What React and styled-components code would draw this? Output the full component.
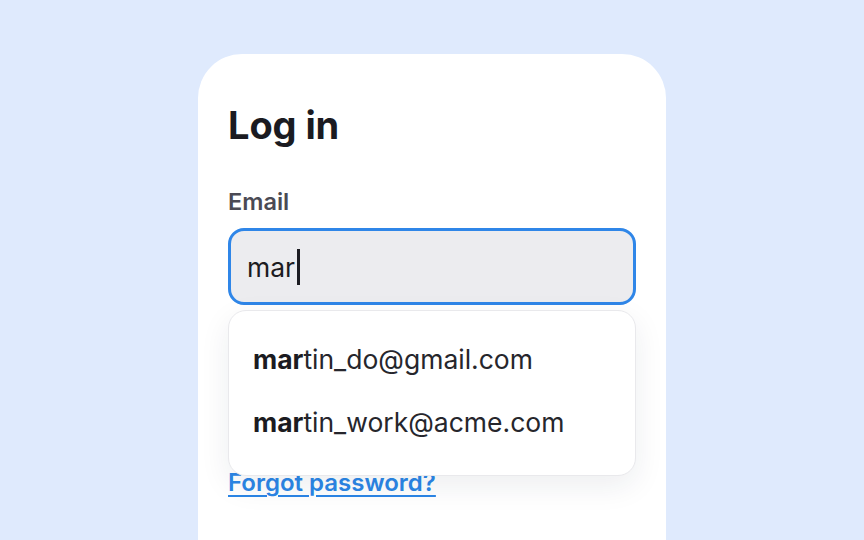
import React from "react";
import styled, { createGlobalStyle } from "styled-components";

const Global = createGlobalStyle`
  html, body { margin: 0; padding: 0; }
  body {
    width: 864px; height: 540px; overflow: hidden;
    background: #dfeafd;
    font-family: Inter, "Noto Sans", sans-serif;
  }
`;

const Page = styled.div`
  width: 864px;
  height: 540px;
  display: flex;
  justify-content: center;
  padding-top: 54px;
  box-sizing: border-box;
  overflow: hidden;
`;

const Card = styled.div`
  width: 468px;
  height: 560px;
  background: #ffffff;
  border-radius: 44px;
  padding: 49px 30px 0 30px;
  box-sizing: border-box;
  display: flex;
  flex-direction: column;
`;

const Title = styled.h1`
  margin: 0;
  font-size: 38px;
  line-height: 45px;
  font-weight: 700;
  color: #1b1b21;
  letter-spacing: -0.1px;
`;

const Field = styled.div`
  position: relative;
  display: flex;
  flex-direction: column;
  gap: 12px;
  margin-top: ${(p) => p.$top}px;
`;

const Label = styled.label`
  font-size: 23.5px;
  line-height: 28px;
  font-weight: 600;
  color: #4a4a54;
`;

const InputBox = styled.div`
  height: 77px;
  box-sizing: border-box;
  border-radius: 16px;
  background: #ececef;
  border: 3px solid ${(p) => (p.$focused ? "#2f86e8" : "transparent")};
  display: flex;
  align-items: center;
  padding: 0 16px;
  font-size: 26.5px;
  color: #1c1c22;
`;

const Caret = styled.span`
  display: inline-block;
  width: 2.5px;
  height: 36px;
  background: #1c1c22;
  margin-left: 2px;
`;

const Dropdown = styled.ul`
  position: absolute;
  left: 0;
  right: 0;
  top: 122px;
  margin: 0;
  padding: 16px 0;
  list-style: none;
  background: #ffffff;
  border: 1px solid #e9e9ec;
  border-radius: 18px;
  box-shadow: 0 10px 30px rgba(30, 40, 70, 0.08);
  z-index: 2;
  height: 166px;
  box-sizing: border-box;
`;

const Option = styled.li`
  height: 63px;
  display: flex;
  align-items: center;
  padding: 0 24px;
  font-size: 26.5px;
  color: #26262c;
  b { font-weight: 700; color: #1b1b21; }
`;

const Link = styled.a`
  margin-top: 23px;
  align-self: flex-start;
  font-size: 24px;
  line-height: 28px;
  font-weight: 600;
  color: #2b86e6;
  text-decoration: underline;
  text-underline-offset: 4px;
  text-decoration-thickness: 1.5px;
`;

const suggestions = [
  { match: "mar", rest: "tin_do@gmail.com" },
  { match: "mar", rest: "tin_work@acme.com" },
];

export default function App() {
  return (
    <>
      <Global />
      <Page>
        <Card>
          <Title>Log in</Title>
          <Field $top={40}>
            <Label>Email</Label>
            <InputBox $focused>
              mar<Caret />
            </InputBox>
            <Dropdown>
              {suggestions.map((s) => (
                <Option key={s.rest}>
                  <b>{s.match}</b>
                  {s.rest}
                </Option>
              ))}
            </Dropdown>
          </Field>
          <Field $top={24}>
            <Label>Password</Label>
            <InputBox />
          </Field>
          <Link href="#">Forgot password?</Link>
        </Card>
      </Page>
    </>
  );
}
